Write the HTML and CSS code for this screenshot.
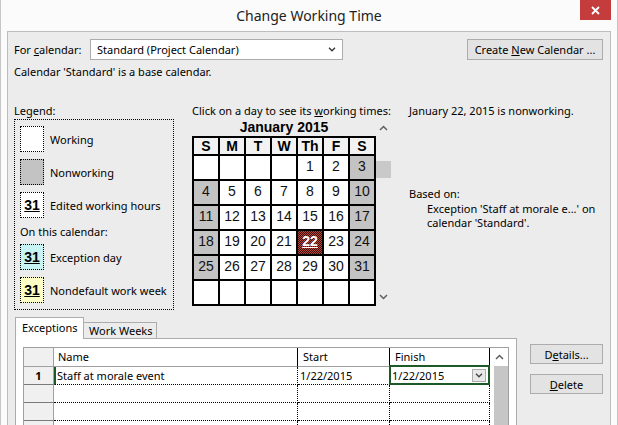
FILE: index.html
```html
<!DOCTYPE html>
<html>
<head>
<meta charset="utf-8">
<title>Change Working Time</title>
<link rel="stylesheet" href="styles.css">
</head>
<body>
<div class="window">
  <div class="titlebar">
    <span></span>
    <div class="title">Change Working Time</div>
    <div class="close"><svg width="9" height="9" viewBox="0 0 9 9"><path d="M1 1 L8 8 M8 1 L1 8" stroke="#fff" stroke-width="1.8" fill="none"/></svg></div>
  </div>
  <div class="content">
    <div class="row-top">
      <div class="lbl">For <u>c</u>alendar:</div>
      <div class="select"><span>Standard (Project Calendar)</span><svg width="8" height="5" viewBox="0 0 8 5"><path d="M1 0.8 L4 3.8 L7 0.8" stroke="#333" stroke-width="1.3" fill="none"/></svg></div>
      <div class="btn btn-new"><span>Create <u>N</u>ew Calendar ...</span></div>
    </div>
    <div class="base-note">Calendar 'Standard' is a base calendar.</div>

    <div class="main">
      <div class="legend-col">
        <div class="head">Legend:</div>
        <div class="legend-box">
          <div class="litem"><div class="sw"></div><span>Working</span></div>
          <div class="litem"><div class="sw sw-non"></div><span>Nonworking</span></div>
          <div class="litem"><div class="sw"><b>31</b></div><span>Edited working hours</span></div>
          <div class="on-cal">On this calendar:</div>
          <div class="litem litem-first"><div class="sw sw-exc"><b>31</b></div><span>Exception day</span></div>
          <div class="litem"><div class="sw sw-nd"><b>31</b></div><span>Nondefault work week</span></div>
        </div>
      </div>

      <div class="cal-col">
        <div class="head">Click on a day to see its <u>w</u>orking times:</div>
        <div class="cal-wrap">
          <div class="cal">
            <div class="month">January 2015</div>
            <div class="grid">
              <div class="hd">S</div><div class="hd">M</div><div class="hd">T</div><div class="hd">W</div><div class="hd">Th</div><div class="hd">F</div><div class="hd">S</div>
              <div class="d"></div><div class="d"></div><div class="d"></div><div class="d"></div><div class="d">1</div><div class="d">2</div><div class="d we">3</div>
              <div class="d we">4</div><div class="d">5</div><div class="d">6</div><div class="d">7</div><div class="d">8</div><div class="d">9</div><div class="d we">10</div>
              <div class="d we">11</div><div class="d">12</div><div class="d">13</div><div class="d">14</div><div class="d">15</div><div class="d">16</div><div class="d we">17</div>
              <div class="d we">18</div><div class="d">19</div><div class="d">20</div><div class="d">21</div><div class="d sel"><b>22</b></div><div class="d">23</div><div class="d we">24</div>
              <div class="d we">25</div><div class="d">26</div><div class="d">27</div><div class="d">28</div><div class="d">29</div><div class="d">30</div><div class="d we">31</div>
              <div class="d"></div><div class="d"></div><div class="d"></div><div class="d"></div><div class="d"></div><div class="d"></div><div class="d"></div>
            </div>
          </div>
          <div class="vscroll">
            <div class="arrow"><svg width="9" height="6" viewBox="0 0 9 6"><path d="M1 5 L4.5 1.5 L8 5" stroke="#606060" stroke-width="1.5" fill="none"/></svg></div>
            <div class="track"><div class="thumb"></div></div>
            <div class="arrow"><svg width="9" height="6" viewBox="0 0 9 6"><path d="M1 1 L4.5 4.5 L8 1" stroke="#606060" stroke-width="1.5" fill="none"/></svg></div>
          </div>
        </div>
      </div>

      <div class="info-col">
        <div class="head">January 22, 2015 is nonworking.</div>
        <div class="based">Based on:</div>
        <div class="based-detail">Exception 'Staff at morale e...' on<br>calendar 'Standard'.</div>
      </div>
    </div>

    <div class="bottom">
      <div class="tabs-area">
        <div class="tabs">
          <div class="tab active">Exceptions</div>
          <div class="tab">Work Weeks</div>
        </div>
        <div class="panel">
          <div class="table">
            <div class="cells">
              <div class="c rn hdr"></div><div class="c hdr name">Name</div><div class="c hdr">Start</div><div class="c hdr">Finish</div>
              <div class="c rn num">1</div><div class="c name cur">Staff at morale event</div><div class="c dt">1/22/2015</div><div class="c dt fin"><span>1/22/2015</span><span class="dd"><svg width="8" height="5" viewBox="0 0 8 5"><path d="M1 0.8 L4 3.8 L7 0.8" stroke="#444" stroke-width="1.3" fill="none"/></svg></span></div>
              <div class="c rn"></div><div class="c name"></div><div class="c dt"></div><div class="c dt"></div>
              <div class="c rn"></div><div class="c name"></div><div class="c dt"></div><div class="c dt"></div>
              <div class="c rn"></div><div class="c name"></div><div class="c dt"></div><div class="c dt"></div>
            </div>
            <div class="tscroll">
              <div class="tarrow"><svg width="9" height="6" viewBox="0 0 9 6"><path d="M1 5 L4.5 1.5 L8 5" stroke="#606060" stroke-width="1.5" fill="none"/></svg></div>
              <div class="tthumb"></div>
            </div>
          </div>
        </div>
      </div>
      <div class="side-btns">
        <div class="btn"><span>D<u>e</u>tails...</span></div>
        <div class="btn"><span><u>D</u>elete</span></div>
      </div>
    </div>
  </div>
</div>
</body>
</html>
```

FILE: styles.css
```css
* { box-sizing: border-box; margin: 0; padding: 0; }
html, body { width: 618px; height: 425px; overflow: hidden; }
body {
  font-family: "Noto Sans", "Open Sans", sans-serif;
  font-size: 11px;
  color: #000;
  background: #fff;
}
u { text-decoration: underline; }

.window {
  width: 618px;
  height: 425px;
  background: #fbfbfb;
  border-left: 1px solid #c6c6c6;
  border-right: 1px solid #c6c6c6;
  padding: 0 6px;
  display: flex;
  flex-direction: column;
}

.titlebar {
  height: 31px;
  flex: none;
  display: grid;
  grid-template-columns: 1fr auto 1fr;
}
.title {
  font-size: 14px;
  line-height: 31px;
  color: #222;
}
.close {
  justify-self: end;
  width: 31px;
  height: 20px;
  background: #c53c3c;
  display: flex;
  align-items: center;
  justify-content: center;
}

.content {
  flex: 1;
  background: #ececec;
  border: 1px solid #bdbdbd;
  border-bottom: none;
  padding: 7px 7px 0 6px;
}

.row-top {
  display: flex;
  align-items: center;
  height: 21px;
}
.lbl { width: 76px; line-height: 21px; }
.select {
  width: 253px;
  height: 21px;
  background: #fff;
  border: 1px solid #acacac;
  padding: 0 6px;
  display: flex;
  align-items: center;
  justify-content: space-between;
}
.btn {
  height: 20px;
  border: 1px solid #acacac;
  background: #e3e3e3;
  display: flex;
  align-items: center;
  justify-content: center;
  white-space: nowrap;
}
.btn-new {
  margin-left: auto;
  width: 136px;
  height: 21px;
}

.base-note { margin-top: 5px; line-height: 14px; }

.main {
  margin-top: 25px;
  display: grid;
  grid-template-columns: 160px 199px 1fr;
  column-gap: 18px;
}
.head { line-height: 14px; margin-bottom: 1px; white-space: nowrap; }

.legend-box {
  height: 191px;
  border: 1px dotted #000;
  padding: 6px 0 0 5px;
}
.litem {
  display: flex;
  align-items: center;
  height: 26px;
  margin-bottom: 7px;
}
.litem span { margin-left: 6px; }
.litem-first { margin-top: 5px; }
.sw {
  width: 24px;
  height: 26px;
  border: 1px dotted #000;
  background: #fff;
  display: flex;
  align-items: center;
  justify-content: center;
}
.sw b {
  font-family: "Liberation Sans", Arial, sans-serif;
  font-size: 14px;
  font-weight: bold;
  text-decoration: underline;
}
.sw-non { background: #c3c3c3; }
.sw-exc { background: #c8f3f3; }
.sw-nd { background: #fdfdc6; }
.on-cal { line-height: 14px; margin-top: 1px; }

.cal-wrap { display: flex; }
.cal { width: 184px; }
.month {
  font-family: "Liberation Sans", Arial, sans-serif;
  font-weight: bold;
  font-size: 14px;
  line-height: 17px;
  text-align: center;
}
.grid {
  display: grid;
  grid-template-columns: repeat(7, 24px);
  grid-template-rows: 16px repeat(6, 23px);
  gap: 2px;
  padding: 2px;
  background: #000;
  font-family: "Liberation Sans", Arial, sans-serif;
  font-size: 14px;
}
.hd {
  background: #f2f2f2;
  font-weight: bold;
  line-height: 16px;
  text-align: center;
}
.d {
  background: #fff;
  line-height: 20px;
  text-align: center;
  color: #111;
}
.d.we { background: #c3c3c3; }
.d.sel {
  background-color: #3e0e0a;
  background-image: conic-gradient(#b8483a 25%, transparent 0 50%, #b8483a 0 75%, transparent 0);
  background-size: 2px 2px;
  color: #fff;
}
.d.sel b { text-decoration: underline; }

.vscroll {
  width: 15px;
  height: 187px;
  display: flex;
  flex-direction: column;
}
.arrow {
  height: 18px;
  display: flex;
  align-items: center;
  justify-content: center;
}
.track { flex: 1; }
.thumb {
  margin-top: 24px;
  height: 17px;
  background: #c9c9c9;
}

.based { margin-top: 69px; line-height: 14px; }
.based-detail { margin-left: 18px; line-height: 14px; margin-top: 1px; }

.bottom {
  margin-top: 7px;
  display: flex;
}
.tabs-area {
  margin-left: 1px;
  width: 502px;
}
.tabs {
  display: flex;
  align-items: flex-end;
  height: 21px;
}
.tab {
  height: 16px;
  width: 73px;
  border: 1px solid #acacac;
  border-left: none;
  border-bottom: none;
  background: #ececec;
  padding-left: 5px;
  line-height: 15px;
}
.tab.active {
  align-self: flex-start;
  position: relative;
  z-index: 2;
  width: 69px;
  height: 22px;
  border-left: 1px solid #acacac;
  background: #fff;
  padding-left: 6px;
  line-height: 19px;
}
.panel {
  height: 87px;
  background: #fff;
  border: 1px solid #acacac;
  border-bottom: none;
  padding: 8px 7px 0 7px;
}
.table {
  height: 78px;
  display: flex;
  border: 1px solid #a0a0a0;
  border-bottom: none;
}
.cells {
  display: grid;
  grid-template-columns: 30px 244px 92px 100px;
  grid-template-rows: 19px repeat(4, 18px);
  align-content: start;
}
.c {
  border-right: 1px dotted #000;
  border-bottom: 1px dotted #000;
  padding-left: 3px;
  line-height: 17px;
  white-space: nowrap;
}
.c.hdr {
  border-right: 1px solid #000;
  border-bottom: 1px solid #a0a0a0;
  padding-left: 5px;
  line-height: 18px;
}
.c.hdr.name { padding-left: 4px; }
.c.rn {
  background: #f0f0f0;
  border-right: 1px solid #a0a0a0;
  border-bottom: 1px solid #7a7a7a;
  padding-left: 0;
  text-align: center;
}
.c.rn.num { font-weight: bold; }
.c.rn.hdr { border-bottom: 1px solid #a0a0a0; }
.c.cur { border-left: 2px solid #1e5a28; padding-left: 1px; }
.c.dt { padding-left: 2px; }
.c.fin {
  position: relative;
  display: flex;
  align-items: center;
  justify-content: space-between;
  padding-right: 3px;
}
.c.fin::after {
  content: "";
  position: absolute;
  left: -1px;
  right: -1px;
  top: -2px;
  bottom: -1px;
  border: 2px solid #1e5a28;
}
.dd {
  width: 14px;
  height: 13px;
  border: 1px solid #acacac;
  background: #e8e8e8;
  display: flex;
  align-items: center;
  justify-content: center;
}
.tscroll {
  width: 18px;
  display: flex;
  flex-direction: column;
}
.tarrow {
  height: 18px;
  display: flex;
  align-items: center;
  justify-content: center;
}
.tthumb {
  flex: 1;
  margin-left: 4px;
  background: #c6c6c6;
}

.side-btns {
  margin-left: 13px;
  margin-top: 27px;
  width: 73px;
  display: flex;
  flex-direction: column;
  gap: 10px;
}
```
